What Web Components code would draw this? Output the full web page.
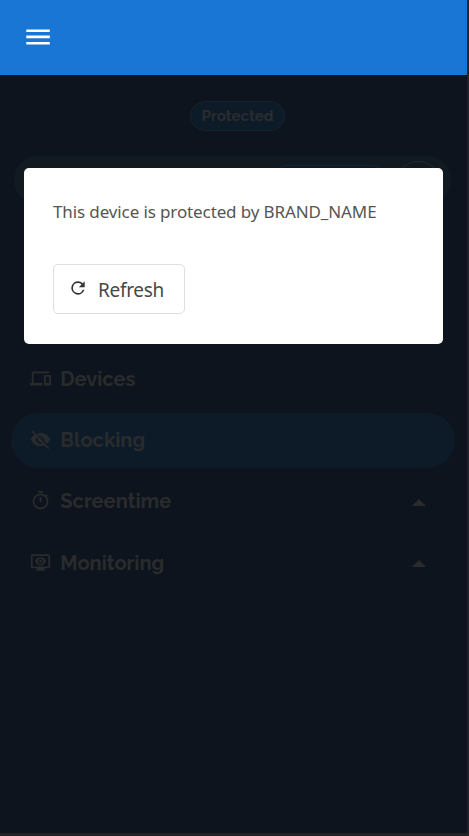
<!DOCTYPE html>
<html lang="en"><head><meta charset="utf-8"><title>Protected device</title>
<style>body{margin:0;background:#222326;overflow:hidden}</style></head><body>
<app-screen>
 <app-bar slot="bar"></app-bar>
 <status-chip><fit-text w="71">Protected</fit-text></status-chip>
 <filter-card></filter-card>
 <nav-list>
  <nav-row icon="devices"><fit-text w="74">Devices</fit-text></nav-row>
  <nav-row icon="blocked" active><fit-text w="84">Blocking</fit-text></nav-row>
  <nav-row icon="timer" expandable><fit-text w="110">Screentime</fit-text></nav-row>
  <nav-row icon="monitor" expandable><fit-text w="103">Monitoring</fit-text></nav-row>
 </nav-list>
 <message-dialog slot="dialog"><fit-text w="322.5">This device is protected by BRAND_NAME</fit-text>
  <refresh-button slot="action"><fit-text w="65">Refresh</fit-text></refresh-button>
 </message-dialog>
</app-screen>
<script>
const define=(name,html,setup)=>customElements.define(name,class extends HTMLElement{
 connectedCallback(){ if(this.shadowRoot)return;
  this.attachShadow({mode:'open'}).innerHTML=html; if(setup)setup(this,this.shadowRoot); }
});
define('app-screen',`<style>:host{display:block;box-sizing:border-box;position:relative;width:467px;height:833px;background:#0d141e;overflow:hidden}
main{display:flex;flex-direction:column;padding:26px 12px 0 11px}</style>
<slot name="bar"></slot><main><slot></slot></main><slot name="dialog"></slot>`);
define('app-bar',`<style>:host{display:flex;align-items:center;box-sizing:border-box;height:75px;padding:0 26px 1px;background:#1976d4}svg{display:block}</style>
<svg width="25" height="17" viewBox="0 0 25 17" fill="#fff"><path d="M.3 .4h23.500v2.600H.3zM.3 6.600h23.500v2.600H.3zM.3 12.900h23.500v2.600H.3z"/></svg>`);
define('status-chip',`<style>:host{display:flex;align-items:center;justify-content:center;align-self:center;box-sizing:border-box;width:95px;height:30px;margin-left:9px;border:1px solid #17232c;border-radius:15px;background:#0d1b28;color:#2b2c2e;font:700 15px/28px Raleway,Lato,sans-serif}</style><slot></slot>`);
define('filter-card',`<style>:host{display:flex;justify-content:flex-end;align-items:flex-start;box-sizing:border-box;height:48px;margin:25px 4px 0 3px;padding:5px 11px 0 0;border-radius:24px;background:#111a21;gap:8px}
i{box-sizing:border-box;display:block}.field{width:118px;height:34px;margin-top:4px;border:1px solid #122436;border-radius:17px}.round{width:43px;height:38px;border:1px solid #24282b;border-radius:50%}</style><i class="field"></i><i class="round"></i>`);
define('nav-list',`<style>:host{display:flex;flex-direction:column;gap:6.200px;margin-top:147.600px}</style><slot></slot>`);
const icons={
devices:'<path d="M4 6h18V4H4c-1.100 0-2 .9-2 2v11H0v3h14v-3H4V6zm19 2h-6c-.55 0-1 .45-1 1v10c0 .55.45 1 1 1h6c.55 0 1-.45 1-1V9c0-.55-.45-1-1-1zm-1 9h-4v-7h4v7z"/>',
blocked:'<path d="M12 4.500c-1.600 0-3.100.3-4.500.9l2.600 2.600A5 5 0 0 1 16.500 14l2.900 2.900A11.800 11.800 0 0 0 23 12C21.300 7.600 17 4.500 12 4.500zM2 3.300l3 3A11.800 11.800 0 0 0 1 12c1.730 4.390 6 7.500 11 7.500 1.550 0 3.030-.3 4.380-.84L20.700 23 22 21.700 3.300 2zM7.500 9.800l1.600 1.600a3 3 0 0 0 3.500 3.500l1.600 1.600A5 5 0 0 1 7.500 9.800zM11.800 9l3.200 3.200A3 3 0 0 0 11.800 9z"/>',
timer:'<path d="M15 1H9v2h6V1zm-4 13h2V8h-2v6zm8.030-6.610 1.420-1.420c-.43-.51-.9-.99-1.410-1.410l-1.420 1.420A9 9 0 1 0 19.030 7.390zM12 20a7 7 0 1 1 0-14 7 7 0 0 1 0 14z"/>',
monitor:'<path fill-rule="evenodd" d="M3 2.500h18a2 2 0 0 1 2 2v12a2 2 0 0 1-2 2h-5l1 2v1H7v-1l1-2H3a2 2 0 0 1-2-2v-12a2 2 0 0 1 2-2zm0 2v12h18v-12zM12 6c3 0 5.300 1.800 6.400 4.500-1.100 2.700-3.400 4.500-6.400 4.500s-5.300-1.800-6.400-4.500C6.700 7.800 9 6 12 6zm0 1.600a2.900 2.900 0 1 0 0 5.800 2.900 2.900 0 0 0 0-5.800z"/><circle cx="12" cy="10.500" r="1.600"/>'};
define('nav-row',`<style>:host{display:flex;align-items:center;box-sizing:border-box;height:55px;padding:0 29px 0 19px;border-radius:27.500px;color:#2a2b2c;font:700 20px/24px Raleway,Lato,sans-serif}
:host([active]){background:#0d1b28}svg{display:block;width:21px;height:21px;fill:currentColor;margin:-1px 9.300px 0 0}b{display:none;margin:2px 0 0 auto;border:7px solid transparent;border-top:0;border-bottom:7px solid #2a2b2b}:host([expandable]) b{display:block}</style>
<svg viewBox="0 0 24 24"></svg><slot></slot><b></b>`,(h,r)=>r.querySelector('svg').innerHTML=icons[h.getAttribute('icon')]);
define('message-dialog',`<style>:host{position:absolute;left:23.500px;top:167.500px;display:flex;flex-direction:column;align-items:flex-start;box-sizing:border-box;width:419px;height:176px;padding:30px 29.500px;border-radius:5px;background:#fff;color:#555;font:400 17px/27px "Segoe UI","Noto Sans",sans-serif}
.action{margin-top:39px}</style><slot></slot><div class="action"><slot name="action"></slot></div>`);
define('refresh-button',`<style>:host{display:flex;align-items:center;box-sizing:border-box;width:132px;height:50px;padding:1px 0 0 14px;border:1.500px solid #dfdfdf;border-radius:5px;color:#484848;font:400 19px/26px "Segoe UI","Noto Sans",sans-serif}fit-text,::slotted(*){padding-top:1px}svg{width:20px;height:20px;margin:-2px 10px 0 0;fill:#333}</style>
<svg viewBox="0 0 24 24"><path d="M17.650 6.350A8 8 0 1 0 19.730 14h-2.080A6 6 0 1 1 12 6c1.660 0 3.140.69 4.220 1.780L13 11h7V4z"/></svg><slot></slot>`);
define('fit-text',`<style>:host{display:block;white-space:nowrap}</style><slot></slot>`,h=>{
 const range=document.createRange();range.selectNodeContents(h);
 const fit=()=>{h.style.letterSpacing='0px';const w=range.getBoundingClientRect().width;
 h.style.letterSpacing=((+h.getAttribute('w')+1-w)/h.textContent.length)+'px';};
 requestAnimationFrame(fit);fit();
});
</script></body></html>
